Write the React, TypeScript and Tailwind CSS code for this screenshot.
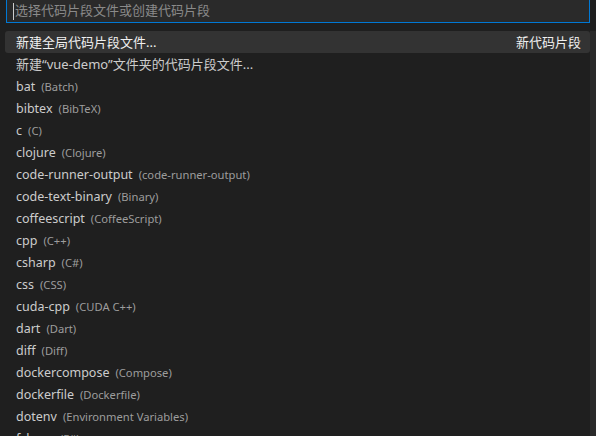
import React from "react";

const items: [string, string][] = [
  ["bat", "Batch"],
  ["bibtex", "BibTeX"],
  ["c", "C"],
  ["clojure", "Clojure"],
  ["code-runner-output", "code-runner-output"],
  ["code-text-binary", "Binary"],
  ["coffeescript", "CoffeeScript"],
  ["cpp", "C++"],
  ["csharp", "C#"],
  ["css", "CSS"],
  ["cuda-cpp", "CUDA C++"],
  ["dart", "Dart"],
  ["diff", "Diff"],
  ["dockercompose", "Compose"],
  ["dockerfile", "Dockerfile"],
  ["dotenv", "Environment Variables"],
  ["fsharp", "F#"],
];

const font = { fontFamily: '"Segoe UI", "Noto Sans", "Noto Sans CJK SC", sans-serif' };

export default function App() {
  return (
    <div
      className="w-[596px] h-[436px] overflow-hidden bg-[#1f1f1f] text-[13px] relative"
      style={font}
    >
      <div className="px-[6px]">
        <div className="h-[23px] bg-[#2a2a2a] border-x border-b border-[#0078d4] flex items-center pl-[6px]">
          <span className="w-px h-[17px] bg-[#cccccc] mr-[1px]" />
          <span className="text-[#8a8a8a] text-[13px]">选择代码片段文件或创建代码片段</span>
        </div>
      </div>
      <div className="mt-[8px] pl-[5px] pr-[6px]">
        <div className="h-[22px] rounded-[3px] bg-[#333333] flex items-center justify-between pl-[11px] pr-[9px] pt-px text-[#f0f0f0]">
          <span>新建全局代码片段文件...</span>
          <span>新代码片段</span>
        </div>
        <div className="h-[22px] flex items-center pl-[11px] pt-px text-[#cccccc]">
          <span>新建“vue-demo”文件夹的代码片段文件...</span>
        </div>
        {items.map(([name, desc]) => (
          <div key={name} className="h-[22px] flex items-center pl-[11px] pt-[2px] whitespace-nowrap">
            <span className="text-[#cccccc] text-[12.5px]">{name}</span>
            <span className="ml-[6px] text-[11.2px] text-[#9d9d9d]">({desc})</span>
          </div>
        ))}
      </div>
      <div className="absolute right-0 top-[31px] w-[6px] h-[405px] bg-[#2a2a2a]" />
    </div>
  );
}
